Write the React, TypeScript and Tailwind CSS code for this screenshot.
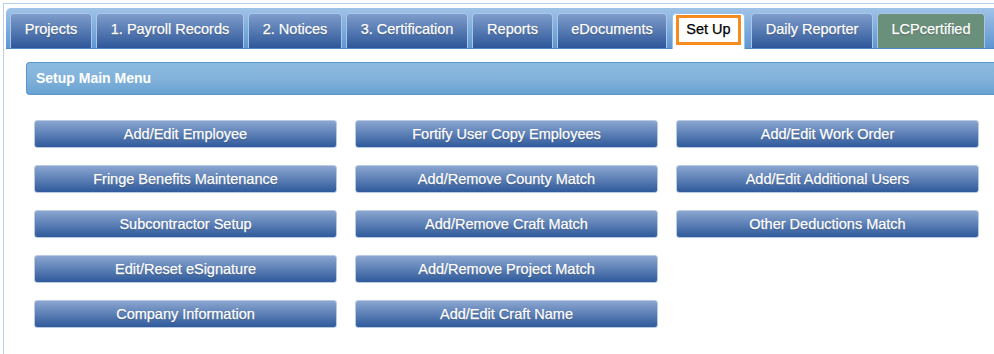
import React from "react";

const tabs: { label: string; w: number; ml: number; kind?: "active" | "green" }[] = [
  { label: "Projects", w: 82, ml: 0 },
  { label: "1. Payroll Records", w: 148, ml: 4 },
  { label: "2. Notices", w: 94, ml: 4 },
  { label: "3. Certification", w: 122, ml: 4 },
  { label: "Reports", w: 81, ml: 4 },
  { label: "eDocuments", w: 110, ml: 4 },
  { label: "Set Up", w: 73, ml: 5, kind: "active" },
  { label: "Daily Reporter", w: 122, ml: 6 },
  { label: "LCPcertified", w: 108, ml: 4, kind: "green" },
];

const buttons = [
  ["Add/Edit Employee", "Fortify User Copy Employees", "Add/Edit Work Order"],
  ["Fringe Benefits Maintenance", "Add/Remove County Match", "Add/Edit Additional Users"],
  ["Subcontractor Setup", "Add/Remove Craft Match", "Other Deductions Match"],
  ["Edit/Reset eSignature", "Add/Remove Project Match", ""],
  ["Company Information", "Add/Edit Craft Name", ""],
];

export default function App() {
  return (
    <div
      className="w-[994px] h-[354px] bg-white overflow-hidden"
      style={{ fontFamily: '"Liberation Sans", Arial, sans-serif' }}
    >
      <div className="ml-[3px] mt-[3px] h-[400px] border-l border-t border-[#b3d1ee]">
        {/* tab strip */}
        <div className="ml-[2px] mt-[4px] h-[41px] rounded-tl-[5px] bg-gradient-to-b from-[#9fc3e8] to-[#5e96d1] border-b border-[#4e88c6] flex items-end pl-[4px]">
          {tabs.map((t) => {
            if (t.kind === "active") {
              return (
                <div
                  key={t.label}
                  style={{ width: t.w, marginLeft: t.ml }}
                  className="h-[36px] -mb-px bg-white rounded-t-[4px] border border-b-0 border-[#9fc3e8] flex items-center justify-center pb-[3px]"
                >
                  <div className="w-[65px] h-[30px] border-[3px] border-[#f68b1f] flex items-center justify-center text-[14.5px] text-black [-webkit-text-stroke:0.25px_black]">
                    {t.label}
                  </div>
                </div>
              );
            }
            return (
              <div
                key={t.label}
                style={{ width: t.w, marginLeft: t.ml }}
                className={`h-[35px] pb-[2px] rounded-t-[4px] border border-b-0 flex items-center justify-center text-[14.5px] text-white [-webkit-text-stroke:0.25px_white] [text-shadow:0_1px_1px_rgba(0,0,0,0.35)] ${
                  t.kind === "green"
                    ? "bg-[#6a8f7b] border-[#a9c6e0]"
                    : "bg-gradient-to-b from-[#7f9dcb] to-[#2e5799] border-[#a9c6e6]"
                }`}
              >
                {t.label}
              </div>
            );
          })}
        </div>

        {/* content */}
        <div className="pl-[22px] pt-[13px]">
          <div className="h-[33px] rounded-l-[4px] border border-r-0 border-[#5b96cb] bg-gradient-to-b from-[#8dbbe0] via-[#82b2db] to-[#69a2d1] flex items-center pl-[9px] pb-[1px] text-[14px] font-bold text-white">
            Setup Main Menu
          </div>

          <div className="mt-[25px] ml-[8px] grid grid-cols-[303px_303px_303px] gap-x-[18px] gap-y-[17px]">
            {buttons.flat().map((b, i) =>
              b ? (
                <div
                  key={i}
                  className="h-[28px] pt-[2px] rounded-[3px] border border-[#b9cbe3] bg-gradient-to-b from-[#8ba6d0] to-[#2f5a9b] flex items-center justify-center text-[14.5px] text-white [-webkit-text-stroke:0.25px_white] [text-shadow:0_1px_1px_rgba(0,0,0,0.3)]"
                >
                  {b}
                </div>
              ) : (
                <div key={i} />
              )
            )}
          </div>
        </div>
      </div>
    </div>
  );
}
